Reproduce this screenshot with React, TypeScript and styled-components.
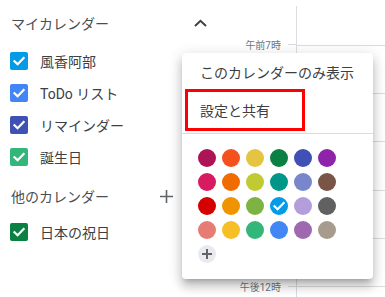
import React from "react";
import styled, { createGlobalStyle } from "styled-components";

const Global = createGlobalStyle`
  html, body { margin: 0; padding: 0; background: #fff; }
  body { width: 385px; height: 297px; overflow: hidden; font-family: Roboto, "Noto Sans CJK JP", sans-serif; }
`;

const Page = styled.div`
  position: relative;
  display: flex;
  width: 385px;
  height: 297px;
  overflow: hidden;
  background: #fff;
`;

const Sidebar = styled.div`
  width: 225px;
  flex: none;
  display: flex;
  flex-direction: column;
`;

const SectionHeader = styled.div<{ $h: number; $pr: number; $mt?: number }>`
  height: ${(p) => p.$h}px;
  margin-top: ${(p) => p.$mt ?? 0}px;
  padding: 0 ${(p) => p.$pr}px 0 11px;
  display: flex;
  align-items: center;
  justify-content: space-between;
  font-size: 14px;
  color: #4a4e52;
`;

const IconBox = styled.span<{ $w: number }>`
  width: ${(p) => p.$w}px;
  height: ${(p) => p.$w}px;
  display: flex;
  align-items: center;
  justify-content: center;
`;

const CalRow = styled.div`
  height: 32px;
  display: flex;
  align-items: center;
  padding-left: 10px;
`;

const Box = styled.span<{ $c: string }>`
  width: 18px;
  height: 18px;
  border-radius: 2px;
  background: ${(p) => p.$c};
  display: flex;
  align-items: center;
  justify-content: center;
  flex: none;
`;

const Label = styled.span`
  margin-left: 12px;
  font-size: 14px;
  color: #3c4043;
  white-space: nowrap;
`;

const Gutter = styled.div`
  width: 71px;
  flex: none;
  padding-top: 20.7px;
  display: flex;
  flex-direction: column;
`;

const GutterRow = styled.div`
  height: 48.4px;
  flex: none;
  display: flex;
  align-items: center;
  justify-content: flex-end;
`;

const TimeLabel = styled.span`
  font-size: 10px;
  color: #70757a;
  margin-right: 7px;
  white-space: nowrap;
`;

const Tick = styled.span`
  width: 8px;
  height: 1px;
  background: #dadce0;
`;

const Grid = styled.div`
  flex: 1;
  margin-top: 6px;
  border-left: 1px solid #dadce0;
  display: flex;
  flex-direction: column;
`;

const GridSpacer = styled.div`
  height: 38.5px;
  flex: none;
`;

const HourRow = styled.div`
  height: 48.4px;
  flex: none;
  border-top: 1px solid #dadce0;
  box-sizing: border-box;
`;

const Popup = styled.div`
  position: absolute;
  left: 182px;
  top: 53px;
  width: 191px;
  height: 226px;
  background: #fff;
  border-radius: 4px;
  box-shadow: 0 5px 5px -3px rgba(0, 0, 0, 0.2), 0 8px 10px 1px rgba(0, 0, 0, 0.14),
    0 3px 14px 2px rgba(0, 0, 0, 0.12);
  display: flex;
  flex-direction: column;
`;

const MenuItem = styled.div`
  height: 38px;
  display: flex;
  align-items: center;
  padding-left: 18px;
  font-size: 14px;
  color: #3c4043;
  white-space: nowrap;
`;

const Highlight = styled.div`
  position: absolute;
  left: 3px;
  top: 36px;
  width: 120px;
  height: 42px;
  box-sizing: border-box;
  border: 3px solid #ff0000;
`;

const Divider = styled.div`
  margin-top: 4px;
  height: 1px;
  background: #dadce0;
`;

const Swatches = styled.div`
  padding: 15px 0 0 16px;
  display: grid;
  grid-template-columns: repeat(6, 18px);
  grid-auto-rows: 18px;
  gap: 6px;
`;

const Dot = styled.span<{ $c: string }>`
  width: 18px;
  height: 18px;
  border-radius: 50%;
  background: ${(p) => p.$c};
  display: flex;
  align-items: center;
  justify-content: center;
`;

const Check = () => (
  <svg width="14" height="14" viewBox="0 0 14 14">
    <path d="M2.5 7.2 L5.6 10.2 L11.6 4" fill="none" stroke="#fff" strokeWidth="2.2" strokeLinecap="square" />
  </svg>
);

const Plus = ({ size, color, w }: { size: number; color: string; w: number }) => (
  <svg width={size} height={size} viewBox={`0 0 ${size} ${size}`}>
    <path d={`M${size / 2} 0 V${size} M0 ${size / 2} H${size}`} stroke={color} strokeWidth={w} />
  </svg>
);

const calendars = [
  { name: "風香阿部", c: "#039be5" },
  { name: "ToDo リスト", c: "#4285f4" },
  { name: "リマインダー", c: "#3f51b5" },
  { name: "誕生日", c: "#33b679" },
];

const colors = [
  "#ad1457", "#f4511e", "#e4c441", "#0b8043", "#3f51b5", "#8e24aa",
  "#d81b60", "#ef6c00", "#c0ca33", "#009688", "#7986cb", "#795548",
  "#d50000", "#f09300", "#7cb342", "#039be5", "#b39ddb", "#616161",
  "#e67c73", "#f6bf26", "#33b679", "#4285f4", "#9e69af", "#a79b8e",
];

const times = ["午前7時", "午前8時", "午前9時", "午前10時", "午前11時", "午後12時"];

export default function App() {
  return (
    <Page>
      <Global />
      <Sidebar>
        <SectionHeader $h={45} $pr={13}>
          <span>マイカレンダー</span>
          <IconBox $w={24}>
            <svg width="13" height="8" viewBox="0 0 13 8">
              <path d="M1 7 L6.5 1.8 L12 7" fill="none" stroke="#3c4043" strokeWidth="2" />
            </svg>
          </IconBox>
        </SectionHeader>
        {calendars.map((c) => (
          <CalRow key={c.name}>
            <Box $c={c.c}>
              <Check />
            </Box>
            <Label>{c.name}</Label>
          </CalRow>
        ))}
        <SectionHeader $h={40} $mt={3} $pr={52}>
          <span>他のカレンダー</span>
          <IconBox $w={14}>
            <Plus size={13} color="#5f6368" w={1.6} />
          </IconBox>
        </SectionHeader>
        <CalRow>
          <Box $c="#0b8043">
            <Check />
          </Box>
          <Label>日本の祝日</Label>
        </CalRow>
      </Sidebar>
      <Gutter>
        {times.map((t) => (
          <GutterRow key={t}>
            <TimeLabel>{t}</TimeLabel>
            <Tick />
          </GutterRow>
        ))}
      </Gutter>
      <Grid>
        <GridSpacer />
        {times.map((t) => (
          <HourRow key={t} />
        ))}
      </Grid>
      <Popup>
        <MenuItem>このカレンダーのみ表示</MenuItem>
        <MenuItem>設定と共有</MenuItem>
        <Highlight />
        <Divider />
        <Swatches>
          {colors.map((c, i) => (
            <Dot key={i} $c={c}>
              {i === 15 && <Check />}
            </Dot>
          ))}
          <Dot $c="#e8eaed">
            <Plus size={10} color="#5f6368" w={2} />
          </Dot>
        </Swatches>
      </Popup>
    </Page>
  );
}
